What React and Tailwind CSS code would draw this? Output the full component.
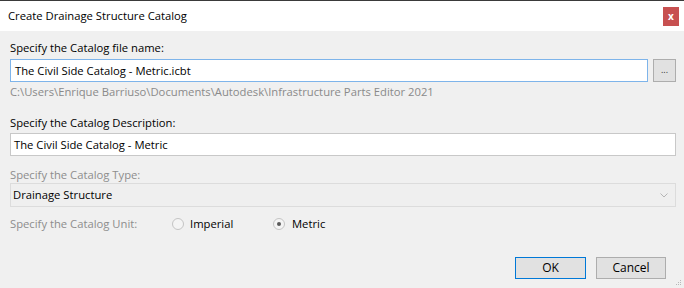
import React from "react";

export default function App() {
  const font = { fontFamily: '"Open Sans", "Noto Sans", Arial, sans-serif' };
  return (
    <div className="w-[684px] h-[288px] flex flex-col bg-[#f0f0f0] overflow-hidden text-[11.25px] text-black" style={font}>
      {/* title bar */}
      <div className="border-t border-[#3a3a3a] bg-white h-[31px] flex items-center shrink-0">
        <span className="ml-[8px] text-[11.25px] leading-[16px] text-black">Create Drainage Structure Catalog</span>
        <div className="ml-auto mr-[5px] w-[16px] h-[19px] bg-[#c75050] flex items-center justify-center">
          <span className="text-white text-[10px] font-bold leading-none">x</span>
        </div>
      </div>

      <div className="flex flex-col pl-[10px] pr-[8px] flex-1">
        <div className="mt-[9px] leading-[16px]">Specify the Catalog file name:</div>
        <div className="mt-[3px] flex items-center">
          <div className="flex-1 h-[23px] bg-white border border-[#7eb4ea] flex items-center px-[4px] leading-[16px]">
            The Civil Side Catalog - Metric.icbt
          </div>
          <div className="ml-[5px] w-[23px] h-[23px] bg-[#e1e1e1] border border-[#adadad] flex items-center justify-center">
            <span className="text-[9px] leading-none text-[#333] -mt-[2px]">...</span>
          </div>
        </div>
        <div className="mt-[2px] leading-[16px] text-[#8a8a8a]">
          C:\Users\Enrique Barriuso\Documents\Autodesk\Infrastructure Parts Editor 2021
        </div>

        <div className="mt-[15px] leading-[16px]">Specify the Catalog Description:</div>
        <div className="mt-[2px] h-[23px] bg-white border border-[#c8c8c8] flex items-center px-[3px] leading-[16px]">
          The Civil Side Catalog - Metric
        </div>

        <div className="mt-[11px] leading-[16px] text-[#8d8d8d]">Specify the Catalog Type:</div>
        <div className="h-[24px] bg-[#efefef] border border-[#dcdcdc] flex items-center pl-[2px] pr-[7px] leading-[16px]">
          <span>Drainage Structure</span>
          <svg className="ml-auto" width="8" height="5" viewBox="0 0 8 5">
            <path d="M0.5 0.5 L4 4 L7.5 0.5" fill="none" stroke="#b5b5b5" strokeWidth="1" />
          </svg>
        </div>

        <div className="mt-[9px] flex items-center leading-[16px]">
          <span className="text-[#8d8d8d] w-[162px]">Specify the Catalog Unit:</span>
          <span className="w-[12px] h-[12px] rounded-full border border-[#c4c4c4] bg-[#f4f4f4]" />
          <span className="ml-[6px] w-[83px]">Imperial</span>
          <span className="w-[12px] h-[12px] rounded-full border border-[#c4c4c4] bg-[#f4f4f4] flex items-center justify-center">
            <span className="w-[4px] h-[4px] rounded-full bg-[#5a5a5a]" />
          </span>
          <span className="ml-[7px]">Metric</span>
        </div>

        <div className="mt-[25px] flex items-center justify-end">
          <div className="w-[71px] h-[22px] bg-[#e1e1e1] border border-[#0078d7] flex items-center justify-center leading-[16px] text-[12px]">OK</div>
          <div className="ml-[10px] w-[70px] h-[22px] bg-[#e1e1e1] border border-[#adadad] flex items-center justify-center leading-[16px] text-[12px]">Cancel</div>
          <div className="w-[10px]" />
        </div>
        <div className="flex justify-end -mr-[6px] mt-[1px]">
          <svg width="7" height="7" viewBox="0 0 7 7">
            <rect x="5" y="0" width="1" height="1" fill="#b8b8b8" />
            <rect x="3" y="2" width="1" height="1" fill="#b8b8b8" />
            <rect x="5" y="2" width="1" height="1" fill="#b8b8b8" />
            <rect x="1" y="4" width="1" height="1" fill="#b8b8b8" />
            <rect x="3" y="4" width="1" height="1" fill="#b8b8b8" />
            <rect x="5" y="4" width="1" height="1" fill="#b8b8b8" />
          </svg>
        </div>
      </div>
    </div>
  );
}
